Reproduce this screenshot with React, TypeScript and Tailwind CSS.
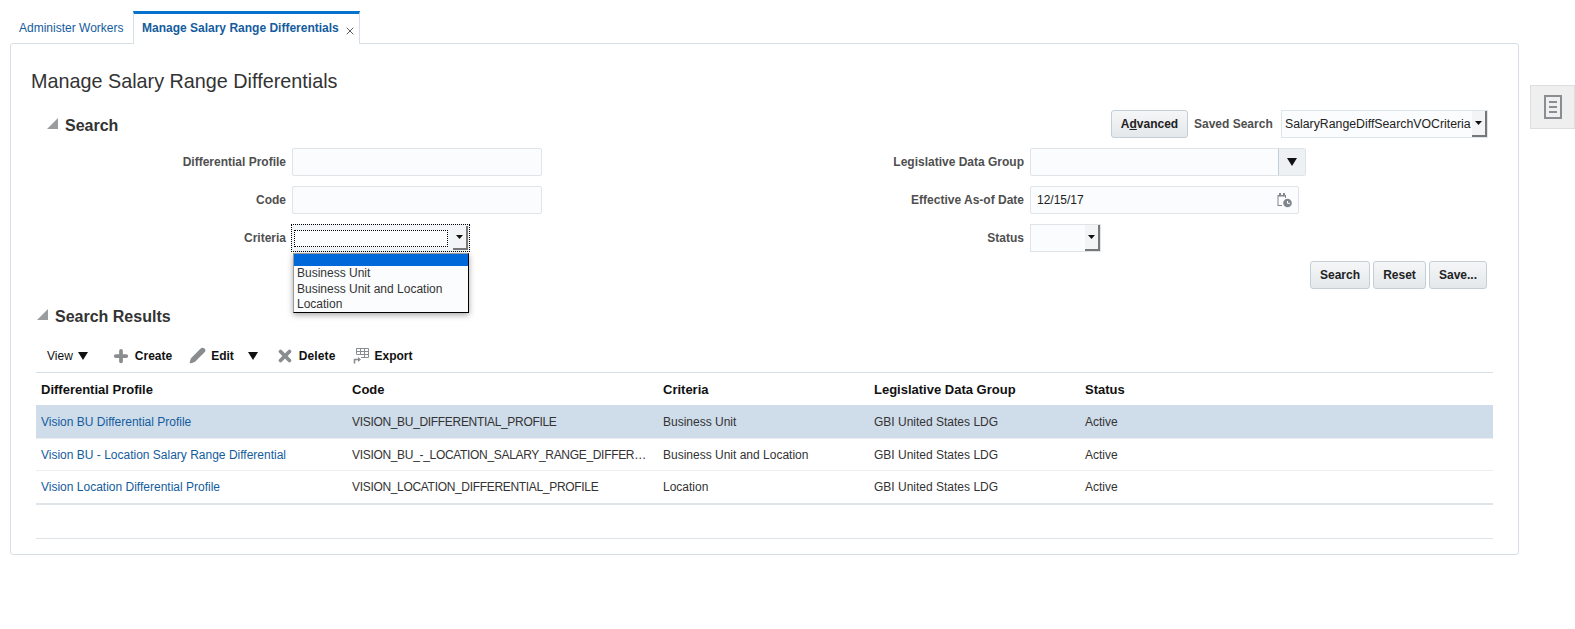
import { Plus, Pencil, X } from 'lucide-react';
import type { ReactNode } from 'react';

function Disclosure({ title }: { title: string }) {
    return (
        <div className="flex items-center gap-[7px]">
            <svg className="-mt-[2px]" width="11" height="11" viewBox="0 0 11 11"><path d="M11 0V11H0Z" fill="#9a9c9e" /></svg>
            <h2 className="pt-[3px] text-[16px] font-bold text-[#333]">{title}</h2>
        </div>
    );
}

function SmallArrow({ className }: { className: string }) {
    return (
        <div className={`flex items-center justify-center bg-[#f3f4f5] border-r-2 border-b-2 border-[#777] ${className}`}>
            <svg width="7" height="4" viewBox="0 0 7 4"><path d="M0 0H7L3.5 4Z" fill="#111" /></svg>
        </div>
    );
}

function Field({ label, children }: { label: string; children: ReactNode }) {
    return (
        <div className="flex items-center gap-[6px] h-[28px]">
            <label className="w-[250px] text-right text-[12px] font-bold text-[#4f4f4f]">{label}</label>
            {children}
        </div>
    );
}

function TextBox({ className, children }: { className: string; children?: ReactNode }) {
    return <div className={`h-[28px] bg-[#fbfcfd] border border-[#dfe4e8] rounded-[2px] flex items-center ${className}`}>{children}</div>;
}

function Btn({ children, className }: { children: ReactNode; className: string }) {
    return (
        <button className={`h-[28px] rounded-[3px] border border-[#c4ced7] bg-gradient-to-b from-[#f5f6f7] to-[#e4e8eb] text-[12px] font-bold text-[#222] ${className}`}>
            {children}
        </button>
    );
}

function CalendarIcon() {
    return (
        <svg width="16" height="16" viewBox="0 0 16 16">
            <path d="M1.5 3H10V6H9V4.5H2.5V13H6V14H1.5Z" fill="#80868b" />
            <rect x="3" y="1" width="2" height="3" fill="#80868b" />
            <rect x="7" y="1" width="2" height="3" fill="#80868b" />
            <circle cx="11.5" cy="11" r="4.3" fill="#80868b" />
            <path d="M11.5 9V11.3H14" stroke="#fff" strokeWidth="1" fill="none" />
        </svg>
    );
}

function ExportIcon() {
    return (
        <svg className="ml-[18px]" width="16" height="18" viewBox="0 0 16 18" fill="none" stroke="#8a8d90" strokeWidth="1">
            <path d="M3.5 1.5H15.5V10.5H8M3.5 1.5V7M3.5 4.5H15.5M3.5 7.5H15.5M7.5 1.5V8M11.5 1.5V10.5" />
            <path d="M1.5 16.5V12.5H7" strokeWidth="1.6" />
            <path d="M5 10L8 12.5L5 15Z" fill="#8a8d90" stroke="none" />
        </svg>
    );
}

const rows = [
    { profile: 'Vision BU Differential Profile', code: 'VISION_BU_DIFFERENTIAL_PROFILE', criteria: 'Business Unit', selected: true },
    { profile: 'Vision BU - Location Salary Range Differential', code: 'VISION_BU_-_LOCATION_SALARY_RANGE_DIFFERENTIAL', criteria: 'Business Unit and Location', selected: false },
    { profile: 'Vision Location Differential Profile', code: 'VISION_LOCATION_DIFFERENTIAL_PROFILE', criteria: 'Location', selected: false },
];

const cols = 'grid grid-cols-[311px_311px_211px_211px_1fr]';

export default function App() {
    return (
        <div className="w-[1575px] h-[629px] overflow-hidden bg-white flex font-['Liberation_Sans',Arial,sans-serif] text-[12px] text-[#222]">
            <div className="w-[1509px] ml-[10px] pt-[11px] shrink-0">
                <div className="flex h-[33px] pl-[9px] relative z-10 -mb-px">
                    <div className="w-[114px] pt-[5px] text-[12px] text-[#145c9e] leading-[24px]">Administer Workers</div>
                    <div className="w-[227px] h-[33px] bg-white border-x border-[#d6dfe6] border-t-[3px] border-t-[#0572ce] flex items-start pl-[8px] pt-[2px]">
                        <span className="text-[12px] font-bold text-[#145c9e] leading-[24px]">Manage Salary Range Differentials</span>
                        <X size={12} strokeWidth={1.6} className="ml-[5px] mt-[9px] text-[#333]" />
                    </div>
                </div>
                <div className="h-[512px] border border-[#d6dfe6] rounded-[3px] pl-[20px] pt-[24px]">
                    <h1 className="text-[19.8px] leading-[26px] text-[#333]">Manage Salary Range Differentials</h1>
                    <div className="ml-[5px] w-[1457px]">
                        <div className="mt-[16px] flex items-center justify-between h-[28px] pl-[11px] pr-[5px]">
                            <Disclosure title="Search" />
                            <div className="flex items-center">
                                <Btn className="w-[77px]">A<span className="underline">d</span>vanced</Btn>
                                <span className="ml-[6px] w-[87px] font-bold text-[#4f4f4f]">Saved Search</span>
                                <div className="w-[207px] h-[28px] flex bg-[#fbfcfd] border border-[#dfe4e8]">
                                    <span className="flex-1 pl-[3px] leading-[26px] text-[12.3px]">SalaryRangeDiffSearchVOCriteria</span>
                                    <SmallArrow className="w-[15px]" />
                                </div>
                            </div>
                        </div>
                        <div className="mt-[10px] flex">
                            <div className="w-[738px] flex flex-col gap-[10px]">
                                <Field label="Differential Profile"><TextBox className="w-[250px]" /></Field>
                                <Field label="Code"><TextBox className="w-[250px]" /></Field>
                                <Field label="Criteria">
                                    <div className="relative -ml-px w-[179px] h-[28px] border border-dotted border-black flex items-center pl-[2px] pr-[1px] bg-[#f3f6f9]">
                                        <div className="w-[155px] h-[17px] bg-[#fbfcfd] border border-dotted border-black" />
                                        <SmallArrow className="ml-[5px] w-[15px] h-[24px]" />
                                        <div className="absolute left-[1px] top-[28px] w-[176px] h-[60px] z-20 bg-[#fbfcfd] border border-black border-l-[#999] border-t-[#999] shadow-[0_2px_6px_rgba(0,0,0,0.35)] text-[12px] leading-[15.5px] text-[#333]">
                                            <div className="h-[12px] bg-[#0068d9]" />
                                            <div className="pl-[3px]">Business Unit</div>
                                            <div className="pl-[3px]">Business Unit and Location</div>
                                            <div className="pl-[3px]">Location</div>
                                        </div>
                                    </div>
                                </Field>
                            </div>
                            <div className="flex flex-col gap-[10px]">
                                <Field label="Legislative Data Group">
                                    <TextBox className="w-[276px] justify-end">
                                        <div className="w-[27px] h-full flex items-center justify-center bg-[#eef1f3] border-l border-[#c4ced7]">
                                            <svg width="10" height="8" viewBox="0 0 10 8"><path d="M0 0H10L5 8Z" fill="#111" /></svg>
                                        </div>
                                    </TextBox>
                                </Field>
                                <Field label="Effective As-of Date">
                                    <TextBox className="w-[269px] justify-between pl-[6px] pr-[6px]">
                                        <span>12/15/17</span>
                                        <CalendarIcon />
                                    </TextBox>
                                </Field>
                                <Field label="Status">
                                    <div className="w-[71px] h-[28px] flex bg-[#fbfcfd] border border-[#dfe4e8]">
                                        <div className="flex-1" />
                                        <SmallArrow className="w-[15px]" />
                                    </div>
                                </Field>
                            </div>
                        </div>
                        <div className="mt-[9px] flex justify-end gap-[3px] pr-[6px]">
                            <Btn className="w-[60px]">Search</Btn>
                            <Btn className="w-[53px]">Reset</Btn>
                            <Btn className="w-[58px]">Save...</Btn>
                        </div>
                        <div className="mt-[14px] h-[24px] pl-[1px] flex items-center">
                            <Disclosure title="Search Results" />
                        </div>
                        <div className="mt-[13px] h-[33px] border-b border-[#d6dfe6] flex items-center pl-[11px] pb-[1px] text-[#111]">
                            <span>View</span>
                            <svg className="ml-[5px]" width="10" height="8" viewBox="0 0 10 8"><path d="M0 0H10L5 8Z" fill="#111" /></svg>
                            <Plus size={18} strokeWidth={5} className="ml-[24px] text-[#8a8d90]" />
                            <span className="ml-[5px] font-bold">Create</span>
                            <Pencil size={17} fill="#8a8d90" className="ml-[17px] text-[#8a8d90]" />
                            <span className="ml-[5px] font-bold">Edit</span>
                            <svg className="ml-[14px]" width="10" height="8" viewBox="0 0 10 8"><path d="M0 0H10L5 8Z" fill="#111" /></svg>
                            <X size={18} strokeWidth={5} className="ml-[18px] text-[#8a8d90]" />
                            <span className="ml-[5px] font-bold tracking-[0.1px]">Delete</span>
                            <ExportIcon />
                            <span className="ml-[5px] font-bold">Export</span>
                        </div>
                        <div className={`${cols} h-[32px] pt-[1px] items-center font-bold text-[13px] text-[#111] pl-[5px]`}>
                            <div>Differential Profile</div>
                            <div>Code</div>
                            <div>Criteria</div>
                            <div>Legislative Data Group</div>
                            <div>Status</div>
                        </div>
                        <div className="border-b-2 border-[#dfe4e8]">
                            {rows.map((row) => (
                                <div
                                    key={row.code}
                                    className={`${cols} h-[32px] first:h-[34px] items-center pl-[5px] border-b border-[#eceff2] last:border-b-0 ${row.selected ? 'bg-[#cfdcea]' : ''}`}
                                >
                                    <a href="#" className="text-[#145c9e]">{row.profile}</a>
                                    <div className="truncate pr-[13px] tracking-[-0.32px] text-[#333]">{row.code}</div>
                                    <div className="text-[#333]">{row.criteria}</div>
                                    <div className="text-[#333]">GBI United States LDG</div>
                                    <div className="text-[#333]">Active</div>
                                </div>
                            ))}
                        </div>
                        <div className="mt-[33px] border-t border-[#dfe4e8]" />
                    </div>
                </div>
            </div>
            <div className="mt-[85px] ml-[11px] w-[45px] h-[44px] bg-[#efefef] border border-[#dcdfe2] flex items-center justify-center">
                <svg width="18" height="24" viewBox="0 0 18 24" fill="none" stroke="#8a8e92" strokeWidth="2">
                    <rect x="1" y="1" width="16" height="22" />
                    <path d="M5 7H13M5 12H13M5 17H13" />
                </svg>
            </div>
        </div>
    );
}
